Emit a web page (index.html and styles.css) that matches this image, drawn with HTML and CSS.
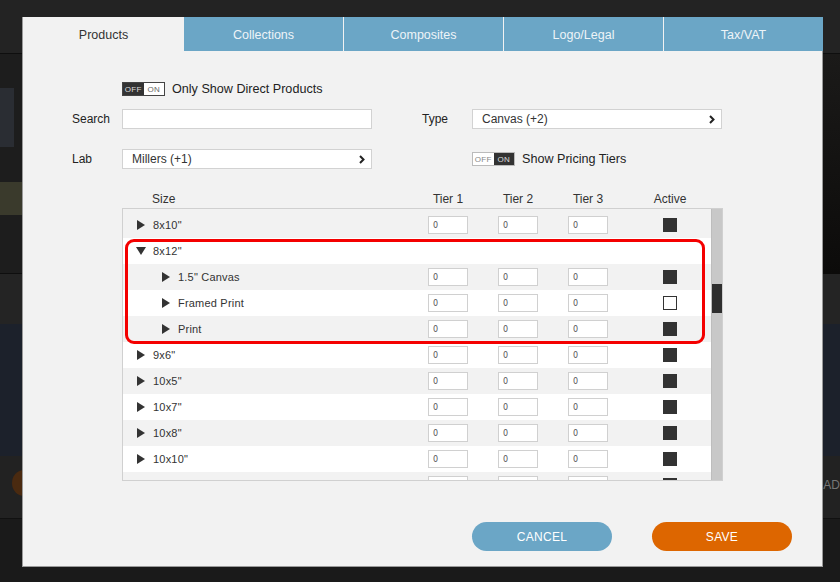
FILE: index.html
```html
<!DOCTYPE html>
<html>
<head>
<meta charset="utf-8">
<link rel="stylesheet" href="styles.css">
</head>
<body>
<div class="backdrop">
  <div class="bg-top"></div>
  <div class="bg-hero"><div class="bg-thumb"></div><div class="bg-plant"></div><div class="bg-dark-right"></div></div>
  <div class="bg-mid"></div>
  <div class="bg-blue"></div>
  <div class="bg-bar"><div class="bg-circle"></div><span class="bg-ad">AD</span></div>
  <div class="bg-bottom"></div>
</div>

<div class="modal">
  <div class="tabs">
    <div class="tab active">Products</div>
    <div class="tab">Collections</div>
    <div class="tab">Composites</div>
    <div class="tab">Logo/Legal</div>
    <div class="tab">Tax/VAT</div>
  </div>

  <div class="form">
    <div class="form-row row-toggle">
      <div class="cell-label"></div>
      <div class="cell-field toggle-line">
        <span class="toggle off-active"><span class="t-off">OFF</span><span class="t-on">ON</span></span>
        <span class="toggle-text">Only Show Direct Products</span>
      </div>
    </div>

    <div class="form-row row-search">
      <div class="cell-label">Search</div>
      <div class="cell-field"><div class="input"></div></div>
      <div class="cell-spacer"></div>
      <div class="cell-label">Type</div>
      <div class="cell-field"><div class="input select">Canvas (+2)<svg class="chev" width="6" height="9" viewBox="0 0 6 9"><path d="M1 1 L4.5 4.5 L1 8" fill="none" stroke="#222" stroke-width="2"/></svg></div></div>
    </div>

    <div class="form-row row-lab">
      <div class="cell-label">Lab</div>
      <div class="cell-field"><div class="input select">Millers (+1)<svg class="chev" width="6" height="9" viewBox="0 0 6 9"><path d="M1 1 L4.5 4.5 L1 8" fill="none" stroke="#222" stroke-width="2"/></svg></div></div>
      <div class="cell-spacer"></div>
      <div class="cell-label"></div>
      <div class="cell-field toggle-line">
        <span class="toggle on-active"><span class="t-off">OFF</span><span class="t-on">ON</span></span>
        <span class="toggle-text">Show Pricing Tiers</span>
      </div>
    </div>
  </div>

  <div class="table-head">
    <div class="h-size">Size</div>
    <div class="h-tier">Tier 1</div>
    <div class="h-tier">Tier 2</div>
    <div class="h-tier">Tier 3</div>
    <div class="h-active">Active</div>
  </div>

  <div class="table-box">
    <div class="rows">
      <div class="row first"><div class="size"><span class="tri"></span>8x10"</div><div class="tier">0</div><div class="tier">0</div><div class="tier">0</div><div class="check"></div></div>
      <div class="row"><div class="size"><span class="tri down"></span>8x12"</div></div>
      <div class="row"><div class="size sub"><span class="tri"></span>1.5" Canvas</div><div class="tier">0</div><div class="tier">0</div><div class="tier">0</div><div class="check"></div></div>
      <div class="row"><div class="size sub"><span class="tri"></span>Framed Print</div><div class="tier">0</div><div class="tier">0</div><div class="tier">0</div><div class="check empty"></div></div>
      <div class="row"><div class="size sub"><span class="tri"></span>Print</div><div class="tier">0</div><div class="tier">0</div><div class="tier">0</div><div class="check"></div></div>
      <div class="row"><div class="size"><span class="tri"></span>9x6"</div><div class="tier">0</div><div class="tier">0</div><div class="tier">0</div><div class="check"></div></div>
      <div class="row"><div class="size"><span class="tri"></span>10x5"</div><div class="tier">0</div><div class="tier">0</div><div class="tier">0</div><div class="check"></div></div>
      <div class="row"><div class="size"><span class="tri"></span>10x7"</div><div class="tier">0</div><div class="tier">0</div><div class="tier">0</div><div class="check"></div></div>
      <div class="row"><div class="size"><span class="tri"></span>10x8"</div><div class="tier">0</div><div class="tier">0</div><div class="tier">0</div><div class="check"></div></div>
      <div class="row"><div class="size"><span class="tri"></span>10x10"</div><div class="tier">0</div><div class="tier">0</div><div class="tier">0</div><div class="check"></div></div>
      <div class="row"><div class="size"><span class="tri"></span></div><div class="tier"></div><div class="tier"></div><div class="tier"></div><div class="check"></div></div>
    </div>
    <div class="scrollbar"><div class="thumb"></div></div>
    <div class="highlight"></div>
  </div>

  <div class="buttons">
    <div class="btn cancel">CANCEL</div>
    <div class="btn save">SAVE</div>
  </div>
</div>
</body>
</html>
```

FILE: styles.css
```css
* { box-sizing: border-box; }
html, body { margin: 0; padding: 0; }
body {
  width: 840px;
  height: 582px;
  overflow: hidden;
  background: #1e1e1e;
  font-family: "Liberation Sans", Arial, sans-serif;
  position: relative;
}

/* blurred page behind the modal */
.backdrop { display: flex; flex-direction: column; height: 582px; }
.bg-top { height: 54px; background: #232323; border-bottom: 1px solid #0e0e0e; }
.bg-hero { height: 220px; background: #1d1d1d; position: relative; border-bottom: 1px solid #0e0e0e; }
.bg-thumb { position: absolute; left: 0; top: 34px; width: 14px; height: 59px; background: #2a2d33; }
.bg-plant { position: absolute; left: 0; top: 128px; width: 22px; height: 33px; background: #3a3a2c; }
.bg-dark-right { position: absolute; right: 0; top: 0; width: 30px; height: 220px; background: linear-gradient(#1b1a19, #0c0b0a); }
.bg-mid { height: 50px; background: #242424; }
.bg-blue { height: 132px; background: #1c212b; }
.bg-bar { height: 63px; background: #222; position: relative; border-bottom: 1px solid #111; }
.bg-circle { position: absolute; left: 12px; top: 14px; width: 24px; height: 26px; border-radius: 50%; background: #4a2a10; }
.bg-ad { position: absolute; right: 0; top: 22px; color: #777; font-size: 12px; }
.bg-bottom { flex: 1; background: #1a1a1a; }

/* modal */
.modal {
  position: absolute;
  left: 22px;
  top: 17px;
  width: 801px;
  height: 550px;
  background: #f2f2f2;
  border: 1px solid #9a9a9a;
  border-top-color: #888;
}
.tabs { display: flex; height: 34px; margin: -1px -1px 0 -1px; }
.tab {
  flex: 1;
  display: flex;
  align-items: center;
  justify-content: center;
  padding-top: 2px;
  background: #6ba6c6;
  color: #eef4f8;
  font-size: 12.5px;
  border-left: 1px solid #f2f2f2;
}
.tab.active { flex: 0 0 162px; background: #f2f2f2; color: #333; border-left: 1px solid #9a9a9a; }
.tab:nth-child(2) { border-left: none; }

.form {
  display: flex;
  flex-direction: column;
  margin: 31px 0 0 49px;
  font-size: 12px;
  color: #222;
}
.form-row { display: flex; height: 20px; }
.form-row.row-toggle { height: 14px; }
.form-row.row-search { margin-top: 13px; }
.form-row.row-lab { margin-top: 20px; }
.cell-label { width: 50px; display: flex; align-items: center; }
.cell-field { width: 250px; display: flex; align-items: center; }
.cell-spacer { width: 50px; }

.input {
  width: 250px;
  height: 20px;
  background: #fff;
  border: 1px solid #d2d2d2;
  font-size: 12px;
  color: #333;
  display: flex;
  align-items: center;
  padding-left: 9px;
}
.select { justify-content: space-between; padding-right: 6px; }
.chev { display: block; }

.toggle-line { gap: 7px; }
.toggle {
  display: inline-flex;
  height: 14px;
  width: 43px;
  border: 1px solid #444;
  font-size: 8px;
  letter-spacing: 0.3px;
}
.toggle span { flex: 1; display: flex; align-items: center; justify-content: center; }
.off-active .t-off { background: #333; color: #ddd; }
.off-active .t-on { background: #fff; color: #666; }
.on-active { border-color: #bbb; }
.on-active .t-off { background: #fff; color: #888; }
.on-active .t-on { background: #333; color: #ddd; }
.toggle-text { font-size: 12.6px; color: #222; }

.table-head {
  display: flex;
  margin: 21px 0 0 99px;
  height: 18px;
  align-items: center;
  font-size: 12px;
  color: #333;
}
.h-size { width: 296px; padding-left: 30px; }
.h-tier { width: 60px; text-align: center; margin-right: 10px; }
.h-active { width: 60px; text-align: center; margin-left: 12px; }

.table-box {
  position: relative;
  margin: 0 0 0 99px;
  width: 601px;
  height: 273px;
  border: 1px solid #d0d0d0;
  display: flex;
  overflow: hidden;
}
.rows { flex: 1; overflow: hidden; }
.row {
  display: flex;
  align-items: center;
  height: 26px;
  background: #fff;
  font-size: 11px;
  letter-spacing: 0.2px;
  color: #333;
}
.row:nth-child(odd) { background: #f2f2f2; }
.row.first { height: 29px; padding-top: 3px; }
.size { width: 305px; display: flex; align-items: center; padding-left: 14px; }
.size.sub { padding-left: 39px; }
.tri {
  width: 0; height: 0;
  border-top: 5px solid transparent;
  border-bottom: 5px solid transparent;
  border-left: 8px solid #333;
  margin-right: 8px;
}
.tri.down {
  border-left: 5px solid transparent;
  border-right: 5px solid transparent;
  border-top: 8px solid #333;
  border-bottom: 0;
  margin-left: -1px;
  margin-right: 7px;
}
.tier {
  width: 40px;
  height: 18px;
  margin-right: 30px;
  background: #fff;
  border: 1px solid #d0d0d0;
  font-size: 8px;
  color: #555;
  display: flex;
  align-items: center;
  padding-left: 4px;
  font-family: "DejaVu Sans", sans-serif;
}
.check {
  width: 14px;
  height: 14px;
  margin-left: 25px;
  background: #333;
}
.check.empty { background: #fff; border: 1px solid #333; }

.scrollbar { width: 11px; background: #c8c8c8; border-left: 1px solid #bdbdbd; position: relative; }
.thumb { position: absolute; left: 0; right: 0; top: 75px; height: 29px; background: #2f2f2f; }

.highlight {
  position: absolute;
  left: 2px;
  top: 30px;
  width: 580px;
  height: 105px;
  border: 3px solid #f40000;
  border-radius: 9px;
}

.buttons {
  display: flex;
  gap: 40px;
  margin: 41px 0 0 449px;
}
.btn {
  width: 140px;
  height: 29px;
  border-radius: 15px;
  display: flex;
  align-items: center;
  justify-content: center;
  color: #fff;
  font-size: 12px;
  letter-spacing: 0.3px;
}
.cancel { background: #6ba6c6; }
.save { background: #dd6600; }
```
